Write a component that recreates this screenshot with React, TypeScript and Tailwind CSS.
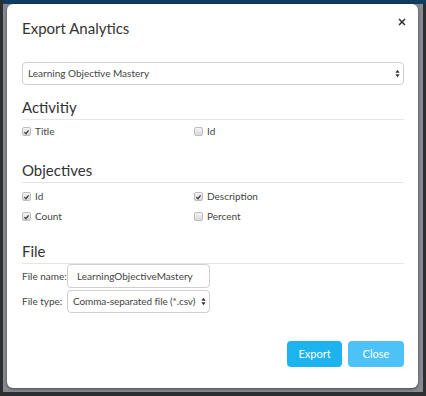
import { X } from "lucide-react";

const Check = ({ on }: { on: boolean }) => (
  <span className="relative inline-flex h-[9px] w-[9px] shrink-0 items-center justify-center rounded-[2px] border border-[#bdbdbd] bg-gradient-to-b from-[#f4f4f4] to-[#d9d9d9]">
    {on && (
      <svg viewBox="0 0 10 10" className="h-[8px] w-[8px]">
        <path d="M2 5.2 L4.2 7.4 L8 2.6" fill="none" stroke="#3a3a3a" strokeWidth="1.8" />
      </svg>
    )}
  </span>
);

const Option = ({ label, on }: { label: string; on: boolean }) => (
  <label className="flex h-[15px] items-center gap-[4px] text-[10px] text-[#444]">
    <Check on={on} />
    {label}
  </label>
);

const Arrows = () => (
  <svg viewBox="0 0 6 10" className="h-[9px] w-[5px] shrink-0">
    <path d="M3 0.5 L5.5 4 L0.5 4 Z M3 9.5 L5.5 6 L0.5 6 Z" fill="#333" />
  </svg>
);

const Section = ({ title }: { title: string }) => (
  <div className="border-b border-[#e6e6e6] pb-[2px]">
    <h3 className="text-[15px] leading-[20px] text-[#333]">{title}</h3>
  </div>
);

export default function App() {
  return (
    <div
      className="flex h-[396px] w-[426px] flex-col bg-[#2d2e30]"
      style={{ fontFamily: "Lato, 'Open Sans', sans-serif" }}
    >
      <div className="ml-[3px] h-[4px] bg-[#0f3c60]" />
      <div className="ml-[3px] mr-[3px] h-[388px] bg-[#878a92] pr-[5px] pl-[4px]">
        <div className="flex h-[384px] flex-col rounded-[6px] bg-white pl-[15px] pr-[14px] shadow-[0_1px_3px_rgba(0,0,0,0.5)]">
          <div className="flex items-start justify-between pt-[13px]">
            <h2 className="text-[15px] leading-[22px] text-[#333]">Export Analytics</h2>
            <X className="mr-[-3px] mt-[0px] h-[10px] w-[10px] text-[#333]" strokeWidth={4} />
          </div>

          <div className="mt-[23px] flex h-[23px] items-center justify-between rounded-[4px] border border-[#cfcfcf] pl-[5px] pr-[3px] text-[10px] text-[#444]">
            <span>Learning Objective Mastery</span>
            <Arrows />
          </div>

          <div className="mt-[12px]">
            <Section title="Activitiy" />
            <div className="mt-[4px] grid grid-cols-[172px_1fr]">
              <Option label="Title" on />
              <Option label="Id" on={false} />
            </div>
          </div>

          <div className="mt-[21px]">
            <Section title="Objectives" />
            <div className="mt-[6px] grid grid-cols-[172px_1fr] gap-y-[5px]">
              <Option label="Id" on />
              <Option label="Description" on />
              <Option label="Count" on />
              <Option label="Percent" on={false} />
            </div>
          </div>

          <div className="mt-[17px]">
            <Section title="File" />
            <div className="flex items-center whitespace-nowrap text-[10px] text-[#444]">
              <span className="w-[45px]">File name:</span>
              <div className="flex h-[24px] w-[143px] items-center rounded-[4px] border border-[#cfcfcf] px-[9px]">
                LearningObjectiveMastery
              </div>
            </div>
            <div className="mt-[2px] flex items-center whitespace-nowrap text-[10px] text-[#444]">
              <span className="w-[45px]">File type:</span>
              <div className="flex h-[23px] w-[143px] items-center justify-between rounded-[4px] border border-[#cfcfcf] pl-[5px] pr-[3px]">
                <span className="tracking-[-0.1px]">Comma-separated file (*.csv)</span>
                <Arrows />
              </div>
            </div>
          </div>

          <div className="mt-auto mb-[21px] flex justify-end gap-[6px]">
            <button className="h-[26px] w-[55px] rounded-[4px] bg-[#1db3ee] text-[11px] text-white">Export</button>
            <button className="h-[26px] w-[56px] rounded-[4px] bg-[#4dc2f6] text-[11px] text-white">Close</button>
          </div>
        </div>
      </div>
    </div>
  );
}
